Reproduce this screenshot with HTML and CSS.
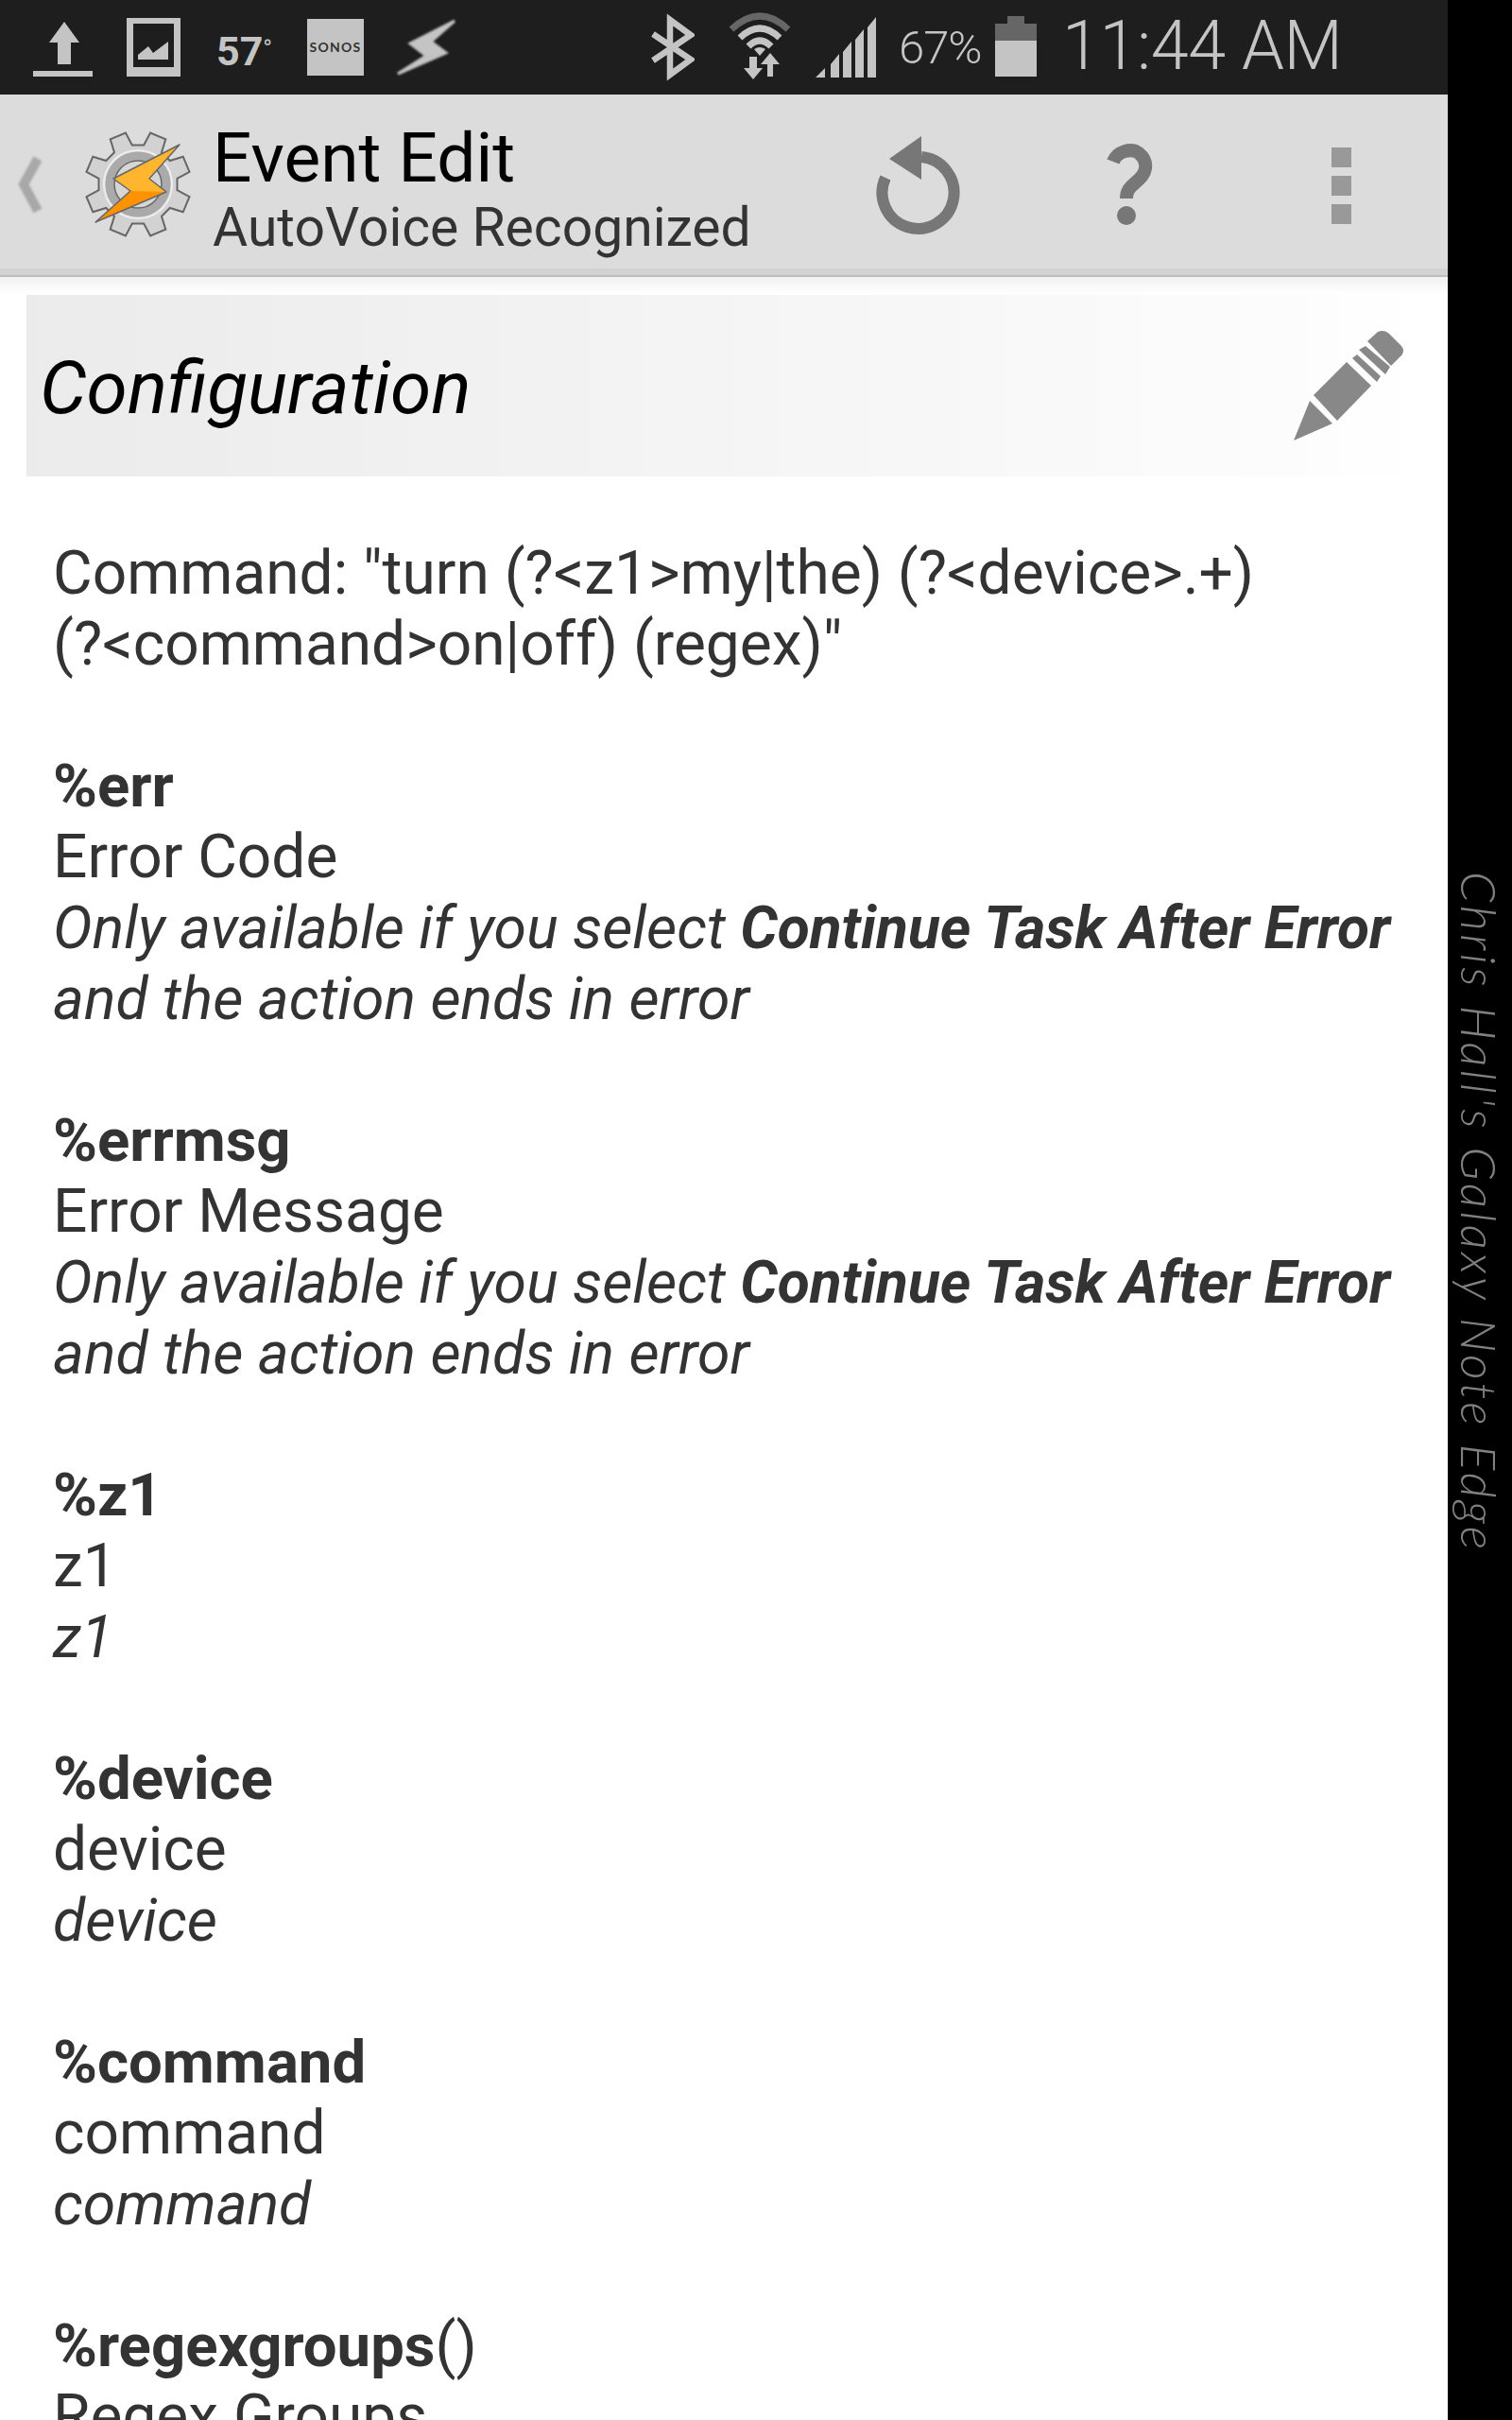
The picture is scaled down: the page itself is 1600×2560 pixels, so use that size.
FILE: index.html
```html
<!DOCTYPE html>
<html lang="en">
<head>
    <meta charset="UTF-8">
    <meta name="viewport" content="width=device-width, initial-scale=1.0">
    <title>Event Edit</title>
    <link rel="stylesheet" href="styles.css">
</head>
<body>

    <div class="screen">

        <!-- Status bar: svg viewBoxes use page coordinates -->
        <div class="statusbar">
            <svg class="st-upload" width="63" height="100" viewBox="35 0 63 100">
                <path class="light" d="M68 23L84 45H75V68H61V45H52ZM35 75H98V81H35Z"/>
            </svg>
            <svg class="st-picture" width="57" height="100" viewBox="134 0 57 100">
                <path class="light" fill-rule="evenodd" d="M134 19H191V81H134ZM141 25V71H184V25Z"/>
                <path class="light" d="M146 63V58L157 49L162 56L178 44V63Z"/>
            </svg>
            <div class="st-temp">57<span class="deg">°</span></div>
            <div class="st-sonos">SONOS</div>
            <svg class="st-flash" width="64" height="100" viewBox="419 0 64 100">
                <path class="light blur" d="M481 22L434 46L451 59L421 78L472 56L456 44Z"/>
            </svg>
            <svg class="st-bt" width="47" height="100" viewBox="688 0 47 100">
                <path class="line" d="M691 64L731 37L709 21V79L731 63L691 36"/>
            </svg>
            <svg class="st-wifi" width="68" height="100" viewBox="770 0 68 100">
                <path class="arc dim" d="M774 31Q804 3 834 31"/>
                <path class="arc" d="M783 40Q804 20 825 40"/>
                <path class="arc" d="M792 49Q804 37 816 49"/>
                <path class="light" d="M798 52Q804 48 810 52L804 59Z"/>
                <path class="light" d="M793 60H801V72H807L797 84L787 72H793Z"/>
                <path class="light" d="M815 56L825 68H818V81H812V68H805Z"/>
            </svg>
            <svg class="st-signal" width="66" height="100" viewBox="862 0 66 100">
                <path class="light" d="M863 82L873 72V82ZM879 68L888 57V82H879ZM892 55L901 44V82H892ZM905 42L914 31V82H905ZM918 29L927 18V82H918Z"/>
            </svg>
            <div class="st-pct">67%</div>
            <svg class="st-battery" width="44" height="100" viewBox="1053 0 44 100">
                <path class="dark" d="M1066 17H1084V25H1097V43H1053V25H1066Z"/>
                <rect class="light" x="1053" y="43" width="44" height="38"/>
            </svg>
            <div class="st-time">11:44 AM</div>
        </div>

        <!-- Title bar -->
        <div class="titlebar">
            <svg class="back" width="30" height="70" viewBox="18 160 30 70">
                <path d="M40 168L25 195L40 223"/>
            </svg>
            <svg class="logo" width="116" height="116" viewBox="-58 -58 116 116">
                <polygon class="gear" points="41.5,6.2 54.5,13.1 47.7,29.3 33.8,25 25,33.8 29.3,47.7 13.1,54.5 6.2,41.5 -6.2,41.5 -13.1,54.5 -29.3,47.7 -25,33.8 -33.8,25 -47.7,29.3 -54.5,13.1 -41.5,6.2 -41.5,-6.2 -54.5,-13.1 -47.7,-29.3 -33.8,-25 -25,-33.8 -29.3,-47.7 -13.1,-54.5 -6.2,-41.5 6.2,-41.5 13.1,-54.5 29.3,-47.7 25,-33.8 33.8,-25 47.7,-29.3 54.5,-13.1 41.5,-6.2"/>
                <circle class="gear-rim" r="36"/>
                <circle class="gear-ring" r="30"/>
                <circle class="gear-hole" r="25"/>
                <polygon class="bolt-low" points="-26,-6 -8,7 -45,40 30,8 12,-6"/>
                <polygon class="bolt-top" points="44,-42 -26,-6 -8,7 30,8 12,-6"/>
                <polygon class="bolt-line" points="44,-42 -26,-6 -8,7 -45,40 30,8 12,-6"/>
            </svg>
            <div class="titles">
                <div class="title-main">Event Edit</div>
                <div class="title-sub">AutoVoice Recognized</div>
            </div>
            <svg class="btn-reset" width="94" height="110" viewBox="925 142 94 110">
                <path class="reset-ring" d="M938 188A38 38 0 1 0 976 166"/>
                <path class="reset-head" d="M976 144L942 168L976 190Z"/>
            </svg>
            <svg class="btn-help" width="50" height="90" viewBox="1172 152 50 90">
                <path class="help-line" d="M1179 171C1183 160 1198 156 1206 162C1216 170 1215 181 1207 189C1199 197 1193 199 1193 210"/>
                <circle class="help-dot" cx="1193" cy="228" r="10"/>
            </svg>
            <div class="btn-menu">
                <span></span>
                <span></span>
                <span></span>
            </div>
        </div>
        <div class="title-edge"></div>
        <div class="title-shadow"></div>

        <!-- Configuration header -->
        <div class="config">
            <div class="config-title">Configuration</div>
            <svg class="pencil" width="120" height="120" viewBox="1369 347 120 120">
                <path d="M1388 423L1412 447L1371 465Z"/>
                <path d="M1392 417L1427 382L1453 407L1417 444Z"/>
                <path d="M1433 378L1438 374L1463 397L1459 403Z"/>
                <path d="M1440 369L1447 365L1473 387L1468 395Z"/>
                <path d="M1449 360L1460 350Q1467 347 1472 352L1485 365Q1489 370 1485 375L1474 386Z"/>
            </svg>
        </div>

        <div class="content">
            <p>Command: "turn (?&lt;z1&gt;my|the) (?&lt;device&gt;.+)<br>(?&lt;command&gt;on|off) (regex)"</p>

            <p><b>%err</b><br>Error Code<br><i>Only available if you select <b>Continue Task After Error</b><br>and the action ends in error</i></p>

            <p><b>%errmsg</b><br>Error Message<br><i>Only available if you select <b>Continue Task After Error</b><br>and the action ends in error</i></p>

            <p><b>%z1</b><br>z1<br><i>z1</i></p>

            <p><b>%device</b><br>device<br><i>device</i></p>

            <p><b>%command</b><br>command<br><i>command</i></p>

            <p class="last"><b>%regexgroups</b>()<br>Regex Groups</p>
        </div>
    </div>

    <div class="edge">
        <div class="watermark">Chris Hall's Galaxy Note Edge</div>
    </div>

</body>
</html>
```

FILE: styles.css
```css
html, body {
    margin: 0;
    height: 2560px;
    overflow: hidden;
}

body {
    display: flex;
    background-color: #000;
    font-family: Roboto, "Liberation Sans", sans-serif;
}

svg {
    display: block;
    flex: none;
}

.screen {
    display: flex;
    flex-direction: column;
    width: 1532px;
    height: 2560px;
    background-color: #fff;
}

.edge {
    width: 68px;
    padding-top: 922px;
    box-sizing: border-box;
}

.watermark {
    writing-mode: vertical-rl;
    margin-left: 6px;
    font-family: Lato, sans-serif;
    font-weight: 300;
    font-style: italic;
    font-size: 52px;
    letter-spacing: 3.4px;
    line-height: 56px;
    white-space: nowrap;
    color: #808080;
}

/* status bar */
.statusbar {
    display: flex;
    align-items: flex-start;
    flex: none;
    height: 100px;
    padding-left: 35px;
    background-color: #1e1e1e;
    color: #c4c4c4;
}

.light { fill: #c4c4c4; }
.dark { fill: #666; }
.blur { filter: blur(1.2px); stroke: #c4c4c4; stroke-width: 3; }
.line { fill: none; stroke: #c4c4c4; stroke-width: 6.5; }
.arc { fill: none; stroke: #c4c4c4; stroke-width: 7; }
.arc.dim { stroke: #666; }

.st-picture { margin-left: 36px; }
.st-sonos {
    margin: 20px 0 0 33px;
    width: 60px;
    height: 60px;
    line-height: 60px;
    text-align: center;
    background-color: #c4c4c4;
    color: #333;
    font-family: Lato, sans-serif;
    font-weight: 700;
    font-size: 14px;
    letter-spacing: 1.2px;
}
.st-temp {
    width: 63px;
    margin-left: 38px;
    font-weight: 700;
    font-size: 43px;
    line-height: 102px;
    white-space: nowrap;
}
.deg { font-size: 26px; vertical-align: 9px; font-weight: 400; }
.st-flash { margin-left: 34px; }
.st-bt { margin-left: 205px; }
.st-wifi { margin-left: 35px; }
.st-signal { margin-left: 24px; }
.st-pct {
    width: 89px;
    margin-left: 23px;
    font-weight: 300;
    font-size: 49px;
    line-height: 102px;
    letter-spacing: -1px;
}
.st-battery { margin-left: 13px; }
.st-time {
    margin-left: 27px;
    font-weight: 300;
    font-size: 72px;
    letter-spacing: -0.4px;
    line-height: 98px;
    white-space: nowrap;
}

/* title bar */
.titlebar {
    display: flex;
    align-items: flex-start;
    flex: none;
    height: 184px;
    background-color: #dcdcdc;
}

.back {
    margin: 60px 0 0 18px;
    filter: blur(1px);
}
.back path { fill: none; stroke: #a8a8a8; stroke-width: 10; }

.logo { margin: 37px 0 0 40px; }
.gear { fill: #d2d2d2; stroke: #666; stroke-width: 2; }
.gear-rim { fill: none; stroke: #eee; stroke-width: 2; }
.gear-ring { fill: none; stroke: #aaa; stroke-width: 9; }
.gear-hole { fill: #d6d6d6; stroke: #666; stroke-width: 1.5; }
.bolt-top { fill: #ffb52e; }
.bolt-low { fill: #ff9200; }
.bolt-line { fill: none; stroke: #666; stroke-width: 1.5; stroke-linejoin: round; }

.titles {
    width: 699px;
    margin-left: 21px;
    white-space: nowrap;
}
.title-main {
    margin-top: 28px;
    font-size: 73px;
    line-height: 78px;
    color: #000;
}
.title-sub {
    margin-top: -1px;
    font-size: 57px;
    line-height: 72px;
    color: #333;
}

.btn-reset { margin: 42px 0 0 0; }
.reset-ring { fill: none; stroke: #777; stroke-width: 12; }
.reset-head { fill: #777; }

.btn-help { margin: 52px 0 0 153px; }
.help-line { fill: none; stroke: #777; stroke-width: 14; }
.help-dot { fill: #777; }

.btn-menu {
    display: flex;
    flex-direction: column;
    gap: 9px;
    width: 21px;
    margin: 56px 0 0 188px;
}
.btn-menu span {
    height: 21px;
    background-color: #999;
}

.title-edge {
    flex: none;
    height: 7px;
    background-color: #d2d2d2;
    border-bottom: 2px solid #bdbdbd;
}
.title-shadow {
    flex: none;
    height: 18px;
    background: linear-gradient(#f1f1f1, #fff);
}

/* configuration header */
.config {
    display: flex;
    justify-content: space-between;
    align-items: center;
    flex: none;
    width: 1472px;
    height: 192px;
    margin: 1px 0 0 28px;
    padding: 0 13px 0 14px;
    box-sizing: border-box;
    background: linear-gradient(to right, #ebebeb, #fcfcfc 90%, #fff 100%);
}
.config-title {
    font-style: italic;
    font-size: 78.5px;
    padding-top: 4px;
    color: #000;
}
.pencil path { fill: #888; }

/* body text */
.content {
    margin: 65px 0 0 56px;
    font-size: 64px;
    line-height: 75px;
    color: #333;
}
.content p {
    margin: 0 0 75px;
    white-space: nowrap;
}
.content b { font-size: 63.5px; }
.content i { font-size: 62.5px; }
.content i b { font-size: 62.3px; }
.content .last { margin: 0; }
```
